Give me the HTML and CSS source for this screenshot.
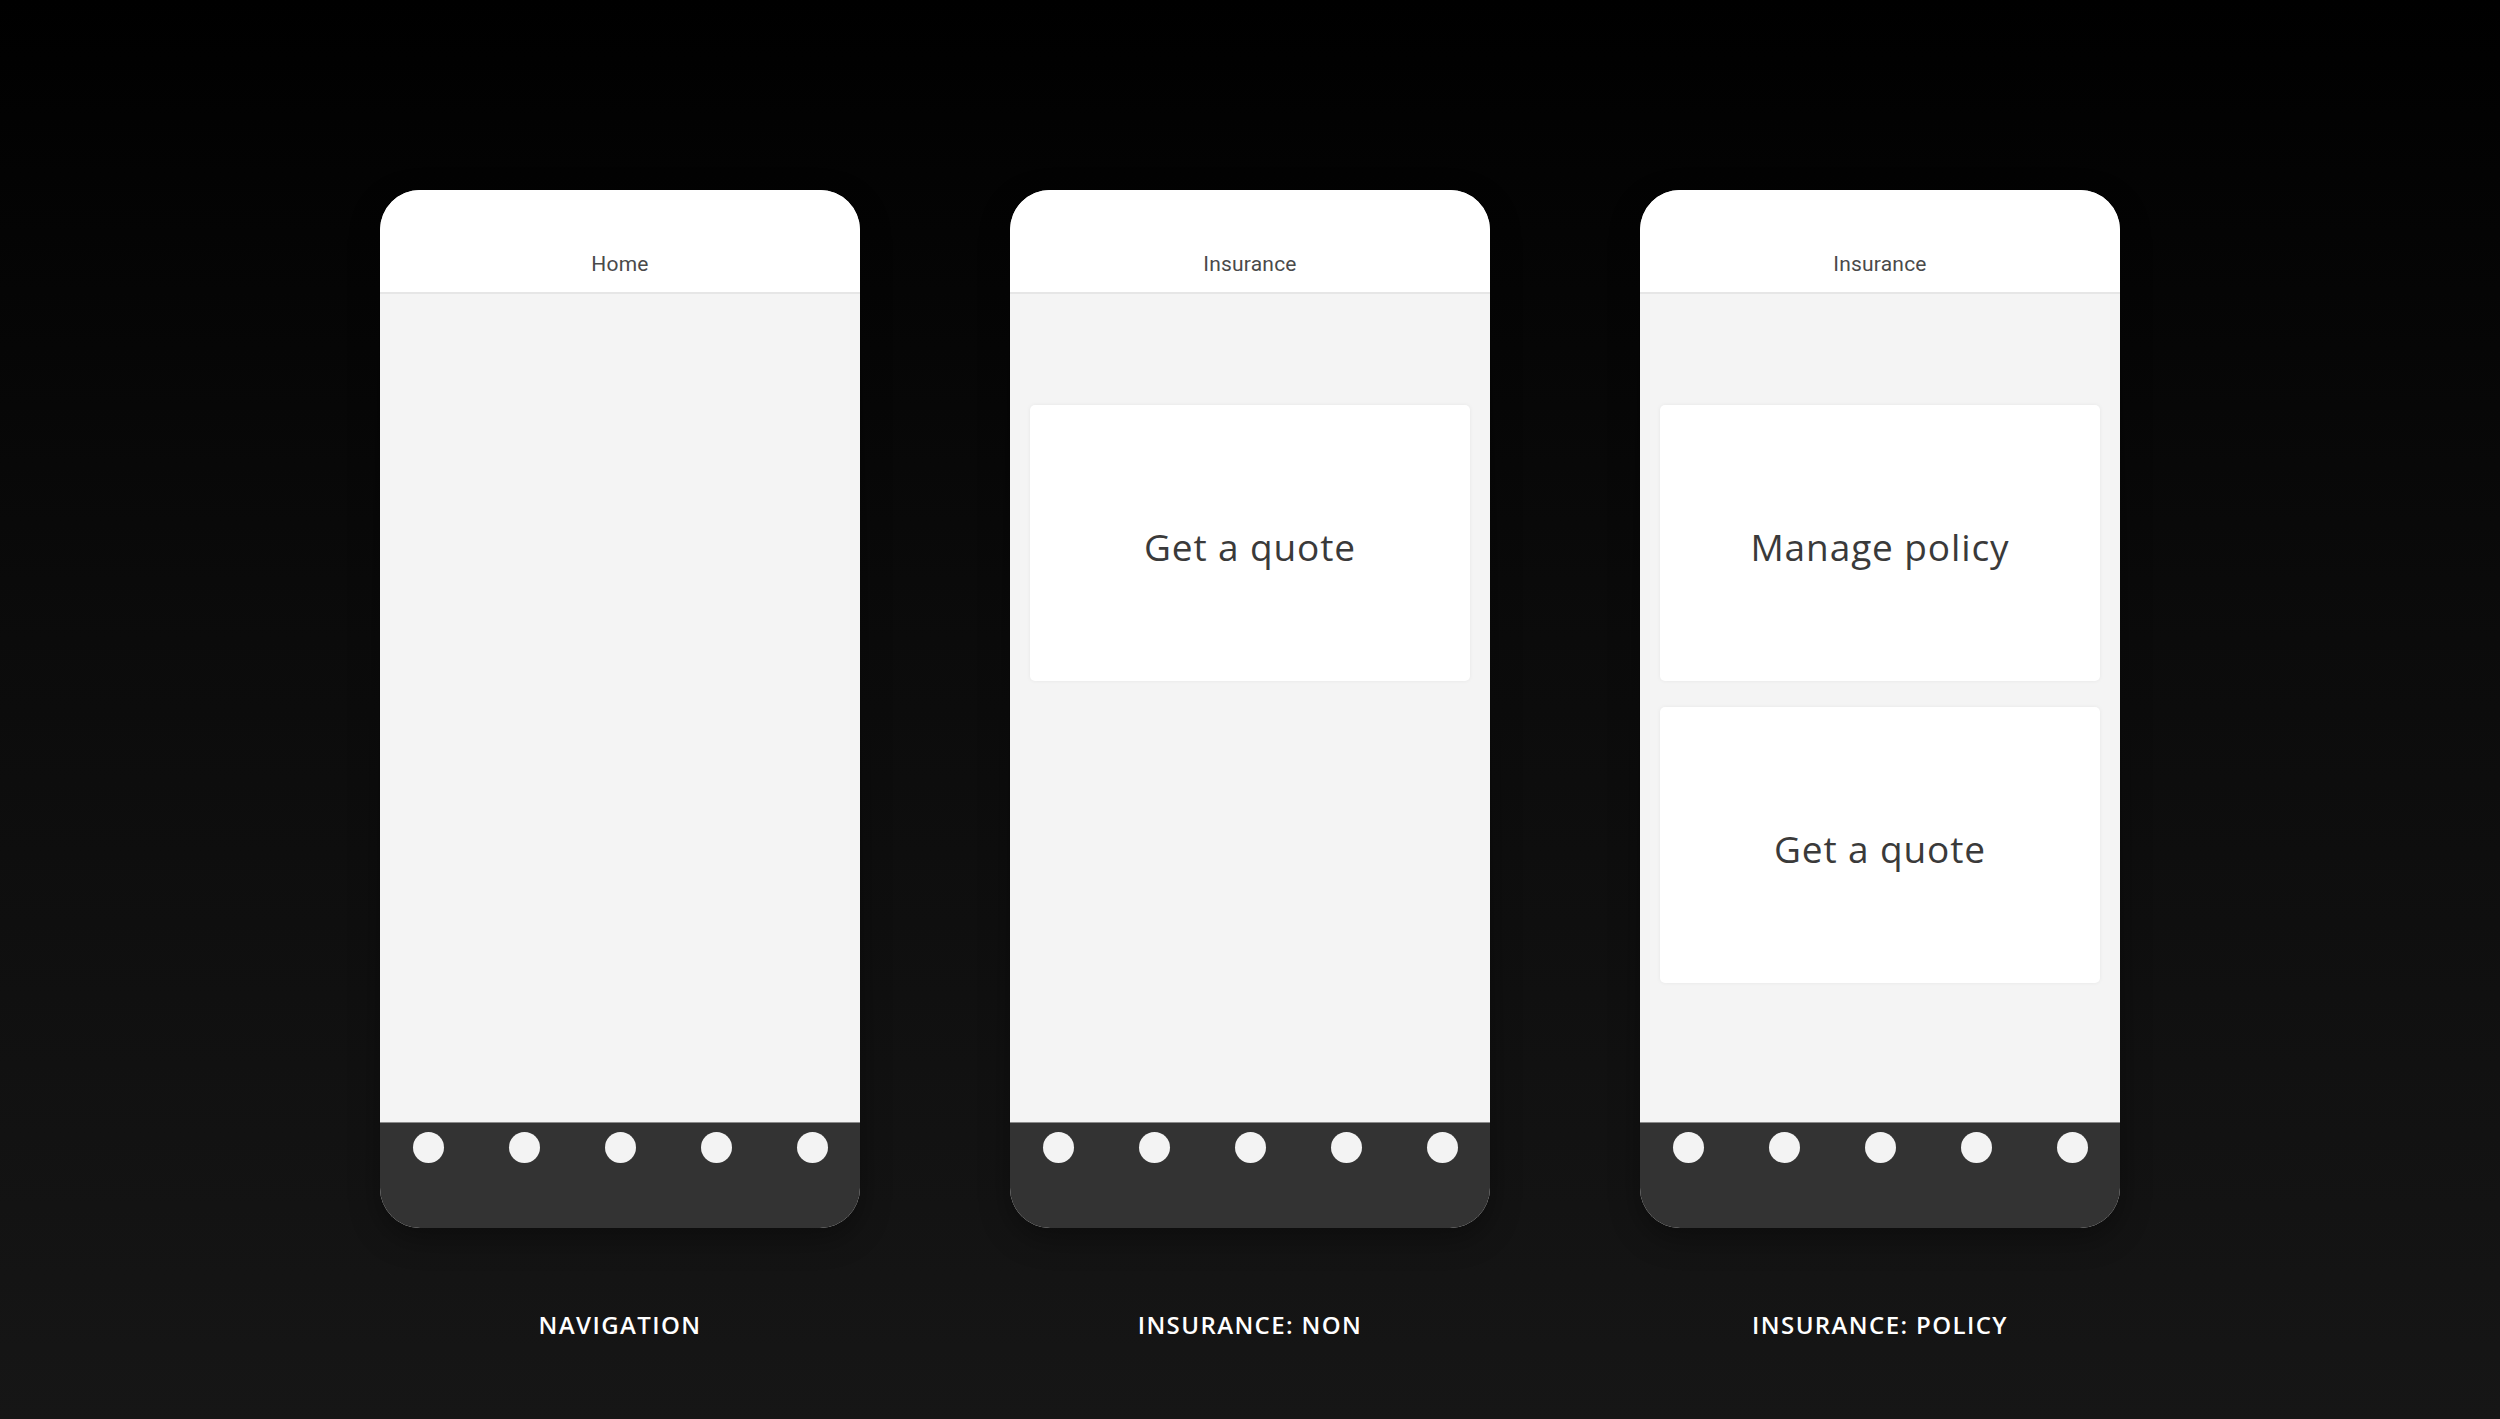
FILE: index.html
```html
<!DOCTYPE html>
<html lang="en">
<head>
<meta charset="utf-8">
<title>Insurance flows</title>
<link rel="stylesheet" href="styles.css">
</head>
<body>
<main class="board">
  <section class="column">
    <div class="phone">
      <header class="phone-header"><span class="phone-title">Home</span></header>
      <div class="phone-body"></div>
      <nav class="phone-nav">
        <span class="dot"></span><span class="dot"></span><span class="dot"></span><span class="dot"></span><span class="dot"></span>
      </nav>
    </div>
    <div class="label">NAVIGATION</div>
  </section>
  <section class="column">
    <div class="phone">
      <header class="phone-header"><span class="phone-title">Insurance</span></header>
      <div class="phone-body">
        <div class="card">Get a quote</div>
      </div>
      <nav class="phone-nav">
        <span class="dot"></span><span class="dot"></span><span class="dot"></span><span class="dot"></span><span class="dot"></span>
      </nav>
    </div>
    <div class="label">INSURANCE: NON</div>
  </section>
  <section class="column">
    <div class="phone">
      <header class="phone-header"><span class="phone-title">Insurance</span></header>
      <div class="phone-body">
        <div class="card">Manage policy</div>
        <div class="card">Get a quote</div>
      </div>
      <nav class="phone-nav">
        <span class="dot"></span><span class="dot"></span><span class="dot"></span><span class="dot"></span><span class="dot"></span>
      </nav>
    </div>
    <div class="label">INSURANCE: POLICY</div>
  </section>
</main>
</body>
</html>
```
FILE: styles.css
```css
html, body {
  margin: 0;
  padding: 0;
}
body {
  width: 2500px;
  height: 1419px;
  overflow: hidden;
  background: linear-gradient(to bottom, #000000 0%, #0b0b0b 45%, #161616 100%);
  font-family: "Open Sans", "Liberation Sans", sans-serif;
}
.board {
  display: flex;
  justify-content: center;
  gap: 150px;
  padding-top: 190px;
}
.column {
  display: flex;
  flex-direction: column;
  align-items: center;
  width: 480px;
}
.phone {
  width: 480px;
  height: 1038px;
  border-radius: 40px;
  overflow: hidden;
  display: flex;
  flex-direction: column;
  background: #f4f4f4;
  box-shadow: 0 10px 30px rgba(0,0,0,0.35);
}
.phone-header {
  background: #ffffff;
  border-bottom: 2px solid #e6e6e6;
  display: flex;
  align-items: flex-end;
  justify-content: center;
  padding-bottom: 14px;
  box-sizing: content-box;
  height: 88px;
}
.phone-title {
  font-family: "Roboto", "Liberation Sans", sans-serif;
  font-size: 21px;
  line-height: 28px;
  color: #4a4a4a;
  letter-spacing: 0.2px;
}
.phone-body {
  flex: 1;
  display: flex;
  flex-direction: column;
  gap: 26px;
  padding: 111px 20px 0;
}
.card {
  height: 276px;
  background: #ffffff;
  border-radius: 5px;
  box-shadow: 0 0 4px rgba(0,0,0,0.06);
  display: flex;
  align-items: center;
  justify-content: center;
  font-family: "Open Sans", "Liberation Sans", sans-serif;
  font-size: 37px;
  color: #3a3a3a;
  letter-spacing: 0.9px;
  padding-top: 6px;
  box-sizing: border-box;
}
.phone-nav {
  height: 106px;
  background: #333333;
  border-top: 1px solid #8a8a8a;
  box-sizing: border-box;
  display: grid;
  grid-template-columns: repeat(5, 96px);
  align-items: start;
  justify-items: center;
  padding-top: 9px;
}
.dot {
  width: 31px;
  height: 31px;
  border-radius: 50%;
  background: #f3f3f3;
}
.label {
  margin-top: 82px;
  font-family: "Open Sans", "Liberation Sans", sans-serif;
  font-weight: 600;
  font-size: 24px;
  line-height: 30px;
  color: #ffffff;
  letter-spacing: 1.4px;
}
```
